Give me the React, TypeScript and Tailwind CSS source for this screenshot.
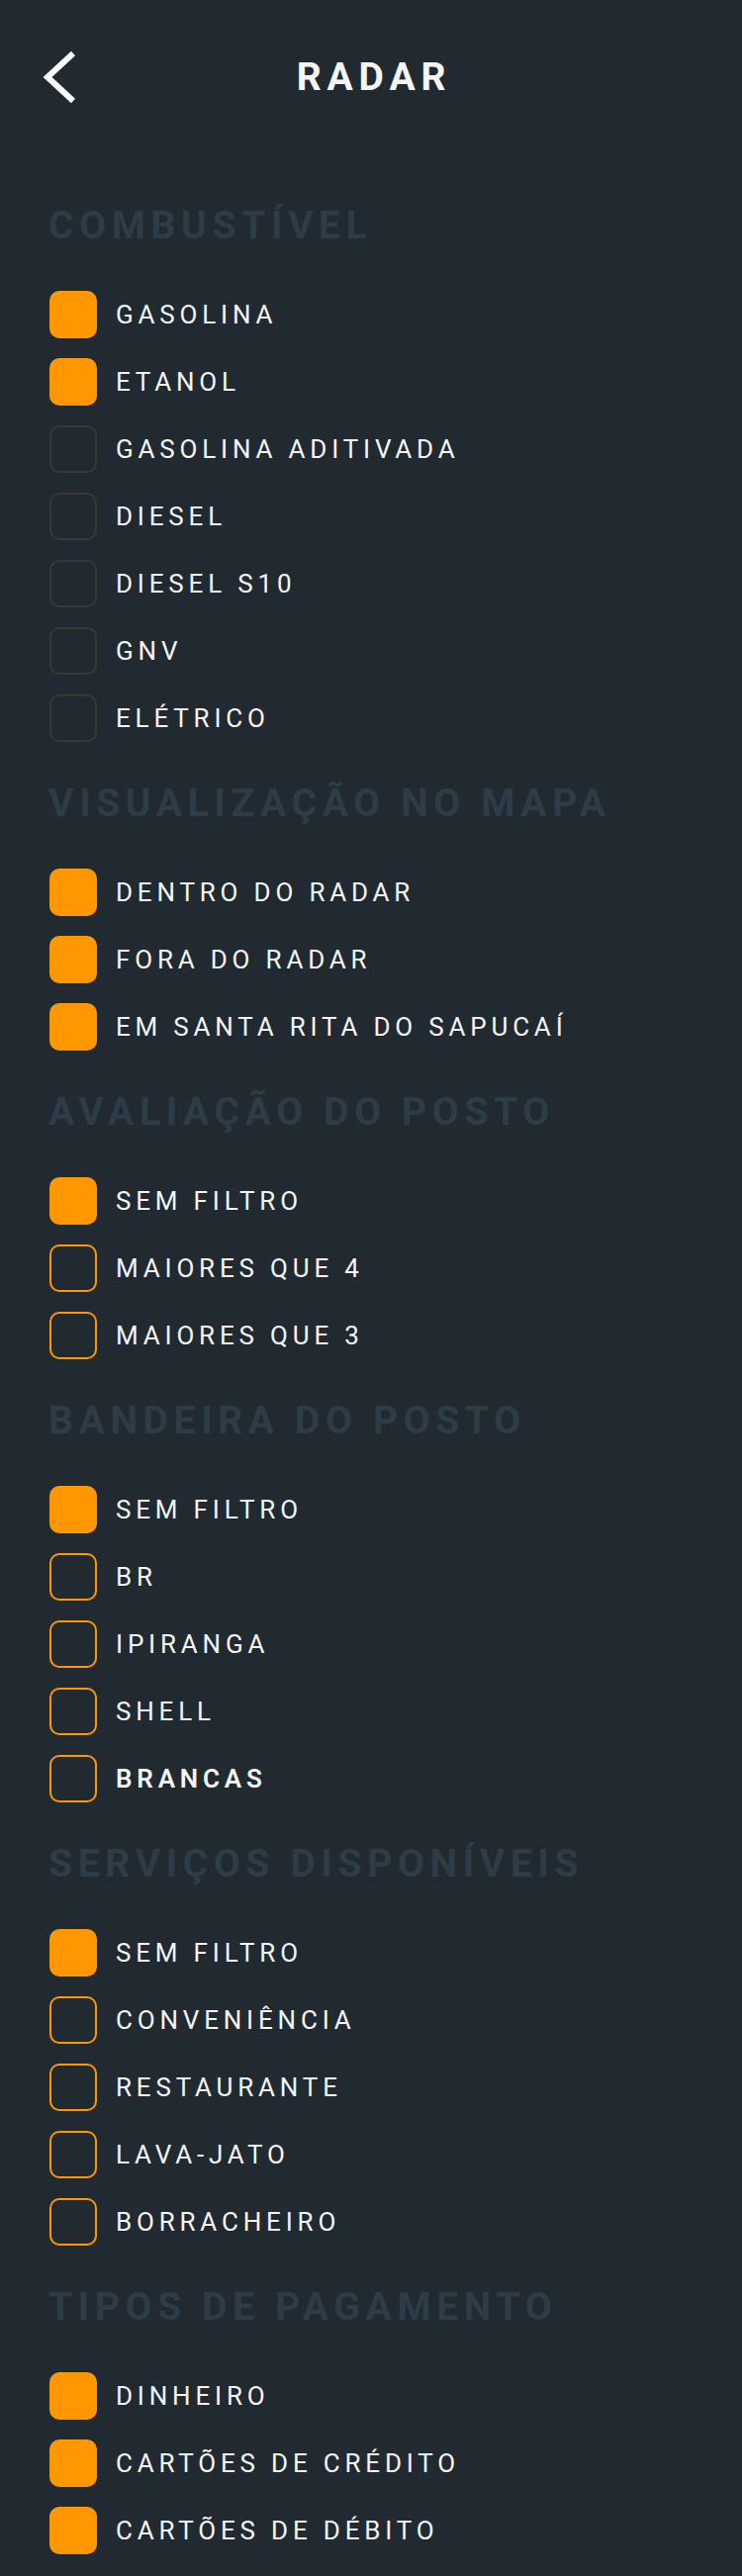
import React from "react";

type Item = { label: string; checked: boolean; bold?: boolean };
type Section = { title: string; dim?: boolean; items: Item[] };

const sections: Section[] = [
  {
    title: "COMBUSTÍVEL",
    dim: true,
    items: [
      { label: "GASOLINA", checked: true },
      { label: "ETANOL", checked: true },
      { label: "GASOLINA ADITIVADA", checked: false },
      { label: "DIESEL", checked: false },
      { label: "DIESEL S10", checked: false },
      { label: "GNV", checked: false },
      { label: "ELÉTRICO", checked: false },
    ],
  },
  {
    title: "VISUALIZAÇÃO NO MAPA",
    items: [
      { label: "DENTRO DO RADAR", checked: true },
      { label: "FORA DO RADAR", checked: true },
      { label: "EM SANTA RITA DO SAPUCAÍ", checked: true },
    ],
  },
  {
    title: "AVALIAÇÃO DO POSTO",
    items: [
      { label: "SEM FILTRO", checked: true },
      { label: "MAIORES QUE 4", checked: false },
      { label: "MAIORES QUE 3", checked: false },
    ],
  },
  {
    title: "BANDEIRA DO POSTO",
    items: [
      { label: "SEM FILTRO", checked: true },
      { label: "BR", checked: false },
      { label: "IPIRANGA", checked: false },
      { label: "SHELL", checked: false },
      { label: "BRANCAS", checked: false, bold: true },
    ],
  },
  {
    title: "SERVIÇOS DISPONÍVEIS",
    items: [
      { label: "SEM FILTRO", checked: true },
      { label: "CONVENIÊNCIA", checked: false },
      { label: "RESTAURANTE", checked: false },
      { label: "LAVA-JATO", checked: false },
      { label: "BORRACHEIRO", checked: false },
    ],
  },
  {
    title: "TIPOS DE PAGAMENTO",
    items: [
      { label: "DINHEIRO", checked: true },
      { label: "CARTÕES DE CRÉDITO", checked: true },
      { label: "CARTÕES DE DÉBITO", checked: true },
    ],
  },
];

function Box({ checked, dim }: { checked: boolean; dim?: boolean }) {
  if (checked) {
    return <div className="w-[48px] h-[48px] shrink-0 rounded-[10px] bg-[#ff9800]" />;
  }
  return (
    <div
      className={
        dim
          ? "w-[48px] h-[48px] shrink-0 rounded-[10px] border-2 border-[#3a392f]"
          : "w-[48px] h-[48px] shrink-0 rounded-[10px] border-2 border-[#ff9800]"
      }
    />
  );
}

export default function App() {
  return (
    <div
      className="min-h-[2604px] w-[750px] bg-[#202a30] text-white"
      style={{ fontFamily: "Roboto, 'Noto Sans', sans-serif" }}
    >
      <div className="h-[156px] grid grid-cols-[1fr_auto_1fr] items-center">
        <div className="pl-[40px] flex items-center">
          <svg width="40" height="60" viewBox="0 0 40 60" fill="none">
            <path d="M34 6 L8 30 L34 54" stroke="#ffffff" strokeWidth="6" strokeLinecap="butt" strokeLinejoin="miter" />
          </svg>
        </div>
        <div className="text-[39px] leading-[48px] font-bold tracking-[0.15em] text-[#f5f5f5] pl-[6px]">RADAR</div>
        <div />
      </div>
      <div className="px-[50px] pt-[48px] pb-[25px] flex flex-col gap-[38px]">
        {sections.map((s) => (
          <div key={s.title} className="flex flex-col">
            <div className="h-[48px] text-[39px] leading-[48px] font-bold tracking-[0.145em] text-[#2d3d48] -ml-[1px] whitespace-nowrap">
              {s.title}
            </div>
            <div className="mt-[42px] flex flex-col gap-[20px]">
              {s.items.map((it) => (
                <div key={it.label} className="h-[48px] flex items-center">
                  <Box checked={it.checked} dim={s.dim} />
                  <span
                    className={
                      it.bold
                        ? "ml-[19px] text-[26px] leading-[48px] font-semibold tracking-[0.185em] text-[#f5f5f5]"
                        : "ml-[19px] text-[26px] leading-[48px] font-normal tracking-[0.185em] text-[#f5f5f5]"
                    }
                  >
                    {it.label}
                  </span>
                </div>
              ))}
            </div>
          </div>
        ))}
      </div>
    </div>
  );
}
